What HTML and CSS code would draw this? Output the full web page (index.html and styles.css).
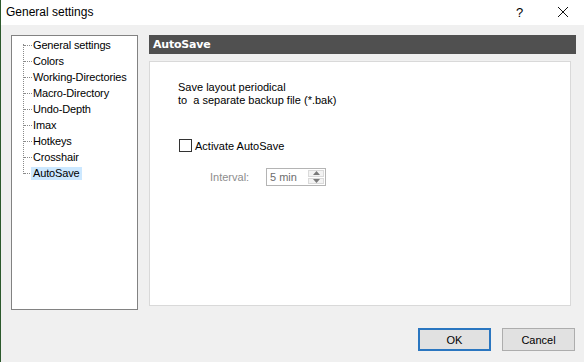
FILE: index.html
```html
<!DOCTYPE html>
<html>
<head>
<meta charset="utf-8">
<link rel="stylesheet" href="styles.css">
</head>
<body>
<div class="window">
  <div class="titlebar">
    <span class="title">General settings</span>
    <span class="help">?</span>
    <span class="close"><svg width="12" height="12" viewBox="0 0 12 12"><path d="M1 1L11 11M11 1L1 11" stroke="#111" stroke-width="1" fill="none"/></svg></span>
  </div>
  <div class="main">
    <div class="tree">
      <div class="vline"></div>
      <div class="item"><span class="hline"></span><span class="label">General settings</span></div>
      <div class="item"><span class="hline"></span><span class="label">Colors</span></div>
      <div class="item"><span class="hline"></span><span class="label">Working-Directories</span></div>
      <div class="item"><span class="hline"></span><span class="label">Macro-Directory</span></div>
      <div class="item"><span class="hline"></span><span class="label">Undo-Depth</span></div>
      <div class="item"><span class="hline"></span><span class="label">Imax</span></div>
      <div class="item"><span class="hline"></span><span class="label">Hotkeys</span></div>
      <div class="item"><span class="hline"></span><span class="label">Crosshair</span></div>
      <div class="item"><span class="hline"></span><span class="label selected">AutoSave</span></div>
    </div>
    <div class="right">
      <div class="header">AutoSave</div>
      <div class="panel">
        <div class="desc">Save layout periodical<br>to&nbsp; a separate backup file (*.bak)</div>
        <label class="check"><span class="box"></span><span>Activate AutoSave</span></label>
        <div class="interval">
          <span class="ilabel">Interval:</span>
          <div class="spin">
            <span class="spinval">5 min</span>
            <div class="spinbtns">
              <div class="sbtn"><svg width="7" height="4" viewBox="0 0 7 4"><path d="M3.5 0L7 4H0Z" fill="#7a7a7a"/></svg></div>
              <div class="sbtn"><svg width="7" height="4" viewBox="0 0 7 4"><path d="M0 0H7L3.5 4Z" fill="#7a7a7a"/></svg></div>
            </div>
          </div>
        </div>
      </div>
    </div>
  </div>
  <div class="footer">
    <button class="btn ok">OK</button>
    <button class="btn">Cancel</button>
  </div>
</div>
</body>
</html>
```
FILE: styles.css
```css
html, body {
  margin: 0;
  padding: 0;
  background: #f0f0f0;
}
body {
  font-family: "Liberation Sans", "DejaVu Sans", sans-serif;
  font-size: 11px;
  color: #000;
}
.window {
  width: 583px;
  height: 362px;
  border-left: 1px solid #2d5a2d;
  display: flex;
  flex-direction: column;
  overflow: hidden;
}
.titlebar {
  height: 25px;
  background: #fff;
  display: flex;
  align-items: center;
  font-family: "Liberation Sans", sans-serif;
  font-size: 12px;
  flex-shrink: 0;
}
.title {
  margin-left: 5px;
  flex: 1;
  margin-top: -1px;
}
.help {
  width: 12px;
  margin-right: 29px;
  font-size: 13px;
  margin-top: -1px;
}
.close {
  width: 12px;
  height: 12px;
  margin-right: 15px;
  display: flex;
  margin-top: -1px;
}
.main {
  display: flex;
  padding: 10px 0 0 10px;
  gap: 11px;
  height: 274px;
}
.tree {
  position: relative;
  width: 125px;
  height: 272px;
  background: #fff;
  border: 1px solid #828282;
  padding-top: 1px;
  box-sizing: content-box;
}
.vline {
  position: absolute;
  left: 11px;
  top: 8px;
  height: 130px;
  border-left: 1px dotted #8a8a8a;
}
.item {
  height: 16px;
  display: flex;
  align-items: center;
}
.hline {
  width: 8px;
  margin-left: 12px;
  border-top: 1px dotted #8a8a8a;
}
.label {
  padding: 0 1px;
  line-height: 13px;
  white-space: nowrap;
  letter-spacing: -0.15px;
}
.label.selected {
  background: #cce8ff;
  padding: 0 2px;
  margin-left: -1px;
}
.right {
  width: 427px;
  display: flex;
  flex-direction: column;
}
.header {
  height: 19px;
  background: #505050;
  color: #fff;
  font-weight: bold;
  font-family: "DejaVu Sans", sans-serif;
  font-size: 11px;
  line-height: 19px;
  padding-left: 4px;
  letter-spacing: -0.2px;
  flex-shrink: 0;
}
.panel {
  margin-top: 7px;
  width: 422px;
  height: 245px;
  background: #fff;
  border: 1px solid #d9d9d9;
  padding-left: 28px;
  box-sizing: border-box;
}
.desc {
  margin-top: 19px;
  line-height: 13px;
}
.check {
  display: flex;
  align-items: center;
  margin-top: 32px;
  margin-left: 1px;
}
.box {
  width: 11px;
  height: 11px;
  border: 1px solid #333;
  background: #fff;
  margin-right: 3px;
}
.interval {
  display: flex;
  align-items: center;
  margin-top: 16px;
  margin-left: 32px;
}
.ilabel {
  color: #8d8d8d;
  width: 56px;
}
.spin {
  width: 58px;
  height: 16px;
  border: 1px solid #b4b4b4;
  display: flex;
  background: #fff;
}
.spinval {
  flex: 1;
  color: #6d6d6d;
  padding-left: 3px;
  line-height: 16px;
}
.spinbtns {
  width: 16px;
  display: flex;
  flex-direction: column;
  padding: 1px 1px 1px 0;
  gap: 1px;
}
.sbtn {
  flex: 1;
  background: #f3f3f3;
  border: 1px solid #dadada;
  display: flex;
  align-items: center;
  justify-content: center;
}
.footer {
  display: flex;
  justify-content: flex-end;
  gap: 11px;
  padding: 0 9px 0 0;
  margin-top: 19px;
}
.btn {
  width: 73px;
  height: 23px;
  background: #e1e1e1;
  border: 1px solid #adadad;
  font-family: "Liberation Sans", sans-serif;
  font-size: 11px;
  color: #000;
  padding: 0;
  margin: 0;
}
.btn.ok {
  border: 2px solid #2a76c0;
}
```
